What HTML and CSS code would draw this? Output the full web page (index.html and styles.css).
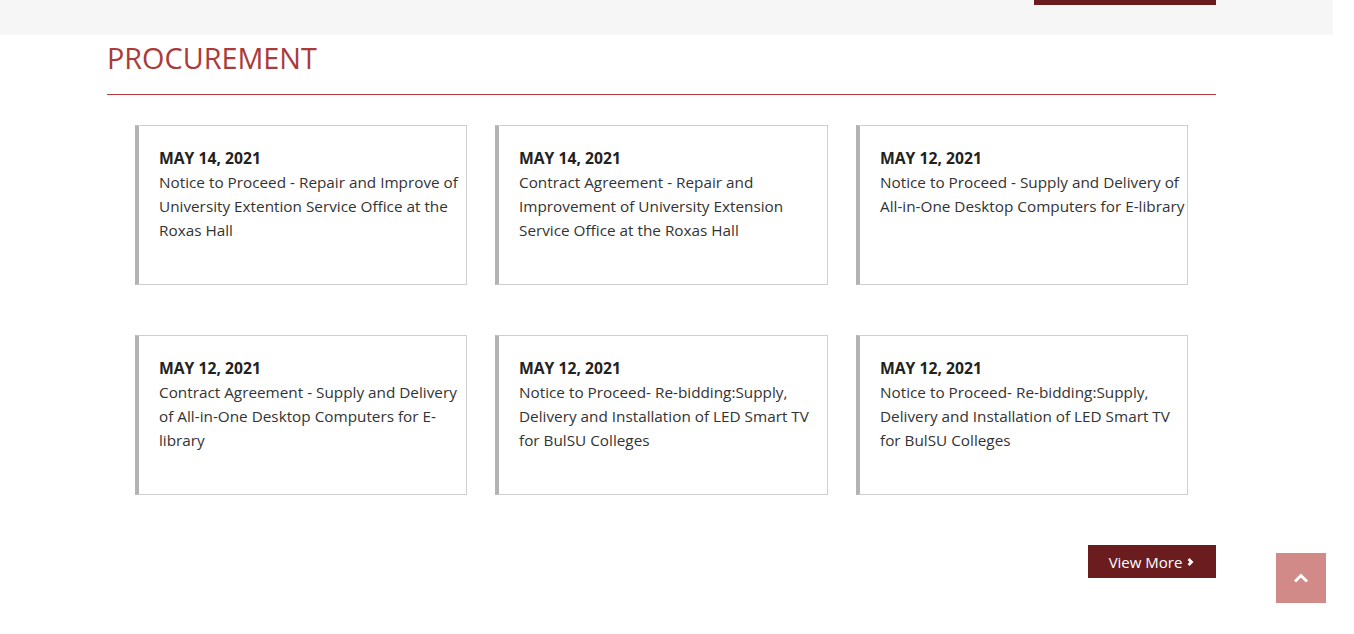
FILE: index.html
```html
<!DOCTYPE html>
<html lang="en">
<head>
<meta charset="utf-8">
<title>Procurement</title>
<link rel="stylesheet" href="styles.css">
</head>
<body>
<div class="topband">
  <div class="topband-inner">
    <span class="topbtn"></span>
  </div>
</div>
<section class="procurement">
  <h2 class="title">PROCUREMENT</h2>
  <div class="grid">
    <div class="card">
      <div class="date">MAY 14, 2021</div>
      <div class="desc">Notice to Proceed - Repair and Improve of<br>University Extention Service Office at the<br>Roxas Hall</div>
    </div>
    <div class="card">
      <div class="date">MAY 14, 2021</div>
      <div class="desc">Contract Agreement - Repair and<br>Improvement of University Extension<br>Service Office at the Roxas Hall</div>
    </div>
    <div class="card">
      <div class="date">MAY 12, 2021</div>
      <div class="desc">Notice to Proceed - Supply and Delivery of<br>All-in-One Desktop Computers for E-library</div>
    </div>
    <div class="card">
      <div class="date">MAY 12, 2021</div>
      <div class="desc">Contract Agreement - Supply and Delivery<br>of All-in-One Desktop Computers for E-<br>library</div>
    </div>
    <div class="card">
      <div class="date">MAY 12, 2021</div>
      <div class="desc">Notice to Proceed- Re-bidding:Supply,<br>Delivery and Installation of LED Smart TV<br>for BulSU Colleges</div>
    </div>
    <div class="card">
      <div class="date">MAY 12, 2021</div>
      <div class="desc">Notice to Proceed- Re-bidding:Supply,<br>Delivery and Installation of LED Smart TV<br>for BulSU Colleges</div>
    </div>
  </div>
  <div class="more-row">
    <a class="more" href="#">View More <svg class="chev" viewBox="0 0 10 10" width="9" height="10"><path d="M2.8 1.6 L6.2 5 L2.8 8.4" fill="none" stroke="#fff" stroke-width="3"/></svg></a>
  </div>
</section>
<a class="totop" href="#"><svg viewBox="0 0 16 16" width="16" height="16"><path d="M2 11.5 L8 5.5 L14 11.5" fill="none" stroke="#fff" stroke-width="3"/></svg></a>
</body>
</html>
```
FILE: styles.css
```css
html, body {
  margin: 0;
  padding: 0;
  background: #fff;
}
body {
  font-family: "Open Sans", "Noto Sans", "Liberation Sans", sans-serif;
  color: #333;
  width: 1333px;
}
.topband {
  background: #f6f6f6;
  height: 35px;
}
.topband-inner {
  width: 1109px;
  margin-left: 107px;
  display: flex;
  justify-content: flex-end;
}
.topbtn {
  display: block;
  width: 182px;
  height: 5px;
  background: #6a1c1f;
}
.procurement {
  width: 1109px;
  margin-left: 107px;
}
.title {
  margin: 0;
  padding-top: 6px;
  font-size: 28.8px;
  font-weight: 400;
  line-height: 34px;
  color: #ab3b3b;
  height: 53px;
  border-bottom: 1px solid #b53a3a;
  box-sizing: content-box;
}
.grid {
  margin: 30px 28px 0 28px;
  display: grid;
  grid-template-columns: 332px 333px 332px;
  column-gap: 28px;
  row-gap: 50px;
}
.card {
  box-sizing: border-box;
  height: 160px;
  border: 1px solid #cfcfcf;
  border-left: 4px solid #b3b3b3;
  padding: 20px 0 0 20px;
}
.date {
  font-weight: 700;
  font-size: 15.7px;
  line-height: 24px;
  color: #222;
}
.desc {
  font-size: 15.3px;
  line-height: 24px;
  color: #333;
  white-space: nowrap;
}
.more-row {
  display: flex;
  justify-content: flex-end;
  margin-top: 50px;
}
.more {
  display: flex;
  align-items: center;
  gap: 4px;
  height: 33px;
  width: 128px;
  box-sizing: border-box;
  justify-content: center;
  background: #6a1c1f;
  color: #fff;
  text-decoration: none;
  font-size: 15px;
}
.totop {
  position: fixed;
  left: 1276px;
  top: 553px;
  width: 50px;
  height: 50px;
  background: #d18a87;
  display: flex;
  align-items: center;
  justify-content: center;
}
```
